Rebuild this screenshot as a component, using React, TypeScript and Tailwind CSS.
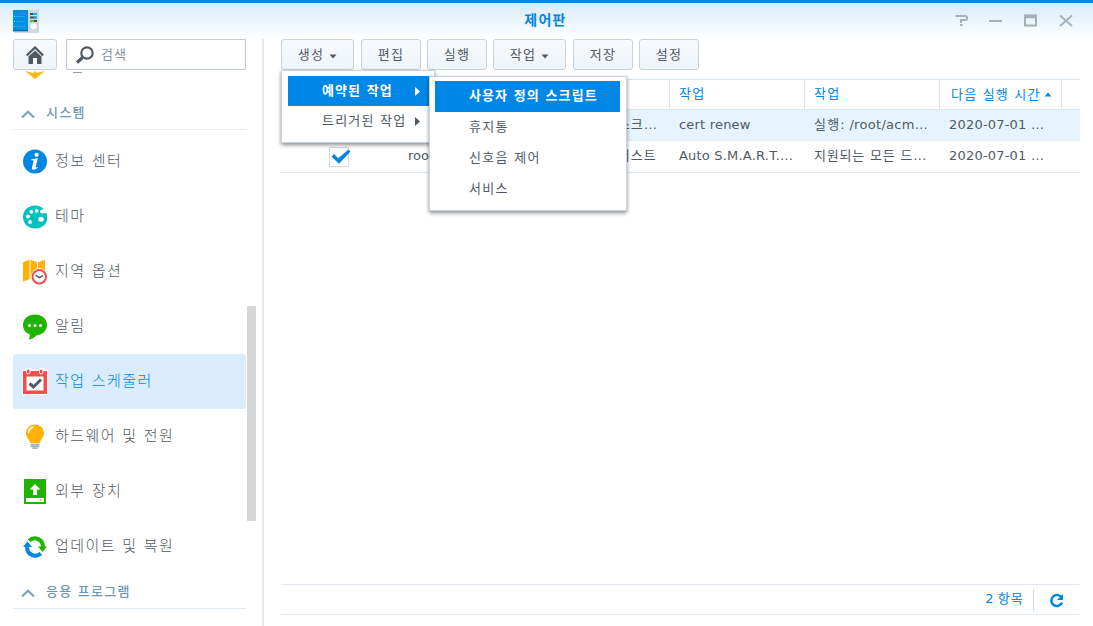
import React from 'react';

const InfoIcon = () => (
  <svg width="24" height="26" viewBox="0 0 24 26">
    <circle cx="12" cy="12.5" r="12" fill="#0086e5" />
    <circle cx="13.6" cy="5.8" r="2.1" fill="#fff" />
    <path d="M8.3 10.3 14.8 9.3 12.7 17.8Q12.5 19 13.4 18.6L14.7 17.9 14.9 18.6Q12.6 20.8 10.6 20.8 8.5 20.6 9.1 18L10.7 11.6 8.2 11.2Z" fill="#fff" />
  </svg>
);

const ThemeIcon = () => (
  <svg width="24" height="24" viewBox="0 0 24 24">
    <path d="M12 .5C5 .5 0 5.500 0 12s5 11.500 12 11.500S24 19 24 14.500V9C22 7 20 9 18.800 8.500 17 8 16.500 6.500 17.500 5.500 18.300 4.500 20 4.500 20.800 4 18.500 1.500 15.500.5 12 .5Z" fill="#00c1bd" />
    <g fill="#fff">
      <circle cx="8.300" cy="6.800" r="1.900" /><circle cx="13.700" cy="5.800" r="1.900" />
      <circle cx="5" cy="11.500" r="1.900" /><circle cx="7" cy="17" r="1.900" />
      <ellipse cx="18" cy="14.200" rx="2.800" ry="2.500" />
    </g>
  </svg>
);

const RegionIcon = () => (
  <svg width="24" height="26" viewBox="0 0 24 26">
    <path d="M0 3.200 6.500.8V20L0 22.800ZM7.500.8 14 3.200V22L7.500 20ZM15 3.200 22 .8V20L15 22.500Z" fill="#ffb200" />
    <circle cx="16.300" cy="17.800" r="8.500" fill="#fff" />
    <circle cx="16.300" cy="17.800" r="6.700" fill="#fff" stroke="#fa4b4b" strokeWidth="2" />
    <path d="m12.700 16.200 3.600 2.500 3.800-2" fill="none" stroke="#505a64" strokeWidth="1.500" />
  </svg>
);

const NotifyIcon = () => (
  <svg width="24" height="26" viewBox="0 0 24 26">
    <path d="M12 .5C5 .5 0 5 0 11c0 4.500 2.500 7.700 6.800 9.500.3 2-.2 3.500-1.400 5 3.400-.5 6-1.800 7.800-4.100C20 20.800 24 16.500 24 11 24 5 19 .5 12 .5Z" fill="#1fb400" />
    <g fill="#fff"><circle cx="6.500" cy="11.500" r="1.500" /><circle cx="12" cy="11.500" r="1.500" /><circle cx="17.500" cy="11.500" r="1.500" /></g>
  </svg>
);

const TaskIcon = () => (
  <svg width="26" height="28" viewBox="0 0 26 28">
    <path d="M0 2h3V0h6v2h8V0h6v2h3v25H0Z" fill="#fff" />
    <path d="M1 3h24v23H1Z" fill="#fa4b4b" />
    <path d="M4.500 8.500h17v14h-17Z" fill="#fff" />
    <rect x="4.500" y="1" width="3.500" height="5" rx="1.700" fill="#fa4b4b" stroke="#fff" />
    <rect x="17.500" y="1" width="3.500" height="5" rx="1.700" fill="#fa4b4b" stroke="#fff" />
    <path d="m7.500 15.500 4 3.500 7.500-7.500" fill="none" stroke="#505a64" strokeWidth="3" />
  </svg>
);

const BulbIcon = () => (
  <svg width="20" height="26" viewBox="0 0 20 26">
    <path d="M10 .5C4.700.5 1 4.500 1 9.300c0 4.200 3.500 6.200 4.300 9.900h9.400C15.500 15.500 19 13.500 19 9.300 19 4.500 15.300.5 10 .5Z" fill="#ffb200" />
    <path d="M3.500 9c.2-3.200 2-5.200 5-6" fill="none" stroke="#fff" strokeWidth="1.500" />
    <path d="M5.500 20.700h9M5.500 22.500h9M7.500 24.200h5" stroke="#a3adb5" strokeWidth="1.400" />
  </svg>
);

const DeviceIcon = () => (
  <svg width="22" height="26" viewBox="0 0 22 26">
    <path d="M0 0h22v25H0Z" fill="#1fb400" />
    <path d="m11 5 5.500 5.500H13V16H9v-5.500H5.500ZM2 19h18v4H2Z" fill="#fff" />
    <circle cx="16.500" cy="21" r="1.100" fill="#ffb200" />
  </svg>
);

const UpdateIcon = () => (
  <svg width="24" height="22" viewBox="0 0 24 22">
    <path d="M6.200 4.700A8 8 0 0 1 19.800 11" fill="none" stroke="#1fb400" strokeWidth="4" />
    <path d="M15 10.500H24l-4.500 5.500Z" fill="#1fb400" />
    <path d="M17.800 17.300A8 8 0 0 1 4.200 11" fill="none" stroke="#0086e5" strokeWidth="4" />
    <path d="M0 11 4.500 5.500 9 11Z" fill="#0086e5" />
  </svg>
);

const items = [
  { label: '정보 센터', Icon: InfoIcon },
  { label: '테마', Icon: ThemeIcon },
  { label: '지역 옵션', Icon: RegionIcon },
  { label: '알림', Icon: NotifyIcon },
  { label: '작업 스케줄러', Icon: TaskIcon, active: true },
  { label: '하드웨어 및 전원', Icon: BulbIcon },
  { label: '외부 장치', Icon: DeviceIcon },
  { label: '업데이트 및 복원', Icon: UpdateIcon },
];

const Chevron = () => (
  <svg width="14" height="9" viewBox="0 0 14 9" className="mt-[3px]"><path d="M1 7.500 7 1.800l6 5.700" fill="none" stroke="#7ea1b9" strokeWidth="2.200" /></svg>
);

const Ko = ({ children }: { children: React.ReactNode }) => <span className="tracking-[1.2px]">{children}</span>;

function ToolButton({ label, menu }: { label: string; menu?: boolean }) {
  return (
    <button className={`flex h-[31px] items-center justify-center gap-[5px] rounded-[3px] border border-[#c8d3de] bg-gradient-to-b from-[#f7fafd] to-[#edf4fa] ${menu ? 'w-[73px]' : 'w-[60px]'}`}>
      <Ko>{label}</Ko>
      {menu && <svg width="8" height="5" viewBox="0 0 8 5" className="mt-[3px]"><path d="M.5.500h7L4 4.500Z" fill="#505a64" /></svg>}
    </button>
  );
}

function Section({ label, className }: { label: string; className: string }) {
  return (
    <div className={`flex w-[233px] items-center gap-[11px] border-b pl-[8px] text-[13px] font-medium leading-[18px] tracking-[1.25px] text-[#6d98b5] ${className}`}>
      <Chevron />
      <span>{label}</span>
    </div>
  );
}

function Row({ user, type, task, action, selected }: { user: string; type: React.ReactNode; task: string; action: React.ReactNode; selected?: boolean }) {
  return (
    <div className={`grid grid-cols-[118px_135px_135px_135px_135px_141px] items-center whitespace-nowrap border-b ${selected ? 'h-[31px] border-[#e2edf6] bg-[#e6f4ff]' : 'h-[32px] border-[#dfe8f0] pb-[1px]'}`}>
      <div className="flex justify-center pr-[2px] pt-[1px]">
        <div className="flex h-[20px] w-[20px] items-center justify-center border border-[#d0dae4] bg-white">
          <svg width="20" height="16" viewBox="0 0 20 16" className="ml-[3px] shrink-0"><path d="m.5 7.500 2.500-2.500 4.200 4.300L17.500.5 19.500 2.500 8 14.800Z" fill="#0086e5" /></svg>
        </div>
      </div>
      <div className="pl-[9px]">{user}</div>
      <div className="flex justify-end pr-[12px]">{type}</div>
      <div className="pl-[10px] tracking-[0.2px]">{task}</div>
      <div className="pl-[10px] tracking-[0.3px]">{action}</div>
      <div className="pl-[10px] tracking-[0.2px]">2020-07-01 …</div>
    </div>
  );
}

export default function App() {
  return (
    <div className="relative flex h-[626px] w-[1093px] flex-col overflow-hidden bg-white font-['DejaVu_Sans','Noto_Sans_CJK_KR',sans-serif] text-[13px] leading-[18px] text-[#505a64]">
      <header className="flex h-[39px] items-center justify-between border-t-[3px] border-[#0086e5] bg-gradient-to-b from-[#d8ebf9] to-white pl-[13px] pr-[19px]">
        <div className="w-[124px]">
          <svg width="26" height="24" viewBox="0 0 26 24">
            <path d="M0 1h15v21H0Z" fill="#0090e3" /><path d="M0 21h15v1.500H0Z" fill="#0069ad" />
            <path d="M15 1h11v21H15Z" fill="#cfd8de" /><path d="M1 22.500h25v1H1Z" fill="#a9b2b8" />
            <path d="M3 7.500h9M3 12.500h9M3 17.500h9" stroke="#20a8ed" />
            <path d="M1 7.500h1M1 12.500h1M1 17.500h1" stroke="#8be7ff" />
            <path d="M17 5h7M17 8.500h7M17 12h7" stroke="#414d55" strokeWidth="1.800" />
            <path d="M20 5h4M21 8.500h3" stroke="#00bbed" strokeWidth="1.800" /><path d="M17 12h4" stroke="#68c735" strokeWidth="1.800" />
            <circle cx="20.500" cy="17.500" r="3" fill="#fff" />
          </svg>
        </div>
        <h1 className="-mt-[2px] text-[14px] font-bold tracking-[1.3px] text-[#0086e5]">제어판</h1>
        <svg width="120" height="14" viewBox="0 0 120 14" fill="none" stroke="#a5b1ba" strokeWidth="2" className="-mt-[3px]">
          <path d="M1.500 3h10q1.500 0 1.500 1.500V6Q13 7 11.500 7H7v3M6 12h2.500" /><path d="M35 8h13" />
          <path d="M71 2.500h11v10H71Z" strokeWidth="2" /><path d="M70 3.500h13" strokeWidth="3.500" />
          <path d="m106 2.500 12 10.500M118 2.500 106 13" />
        </svg>
      </header>

      <div className="flex h-[587px]">
        <aside className="flex w-[264px] flex-col border-r-2 border-[#e6e8ea] pl-[13px]">
          <div className="flex gap-[9px]">
            <button className="flex h-[31px] w-[44px] items-center justify-center rounded-[3px] border border-[#c8d3de] bg-gradient-to-b from-[#f7fafd] to-[#edf4fa]">
              <svg width="18" height="18" viewBox="0 0 18 18">
                <path d="M.8 9.500 9 1.500l8.200 8" fill="none" stroke="#505a64" strokeWidth="2.300" />
                <path d="m2.500 10.500 6.500-6 6.500 6V18h-13Z" fill="#505a64" /><path d="M7 12h4v6H7Z" fill="#fff" />
              </svg>
            </button>
            <div className="flex h-[31px] w-[180px] items-center gap-[7px] border border-[#c0ccd8] bg-white pl-[9px] text-[#8a949e]">
              <svg width="18" height="18" viewBox="0 0 18 18" fill="none" stroke="#505a64"><circle cx="11" cy="7" r="5.700" strokeWidth="2.200" /><path d="m6.500 11.500-5.500 5" strokeWidth="3.300" /></svg>
              <span className="tracking-[1px]">검색</span>
            </div>
          </div>
          <div className="flex h-[556px]">
            <nav className="w-[233px]">
              <div className="flex h-[10px] pl-[12px]">
                <svg width="60" height="10" viewBox="0 0 60 10"><path d="M0 1 8.500 3 10 1 11.500 3 20 1 10 9Z" fill="#ffb619" /><path d="M48 2.500h9" stroke="#969da4" /></svg>
              </div>
              <Section label="시스템" className="h-[50px] border-[#e8eef2] pb-[1px] pt-[18px]" />
              <div className="pt-[4px]">
                {items.map(({ label, Icon, active }) => (
                  <div key={label} className={`flex h-[55px] items-center rounded-[3px] pb-[1px] text-[15px] font-light tracking-[1.45px] ${active ? 'bg-[#d9edff] text-[#0086e5]' : ''}`}>
                    <div className="flex w-[44px] justify-center pt-[2px]"><Icon /></div>
                    <span className="-ml-[2px]">{label}</span>
                  </div>
                ))}
              </div>
              <Section label="응용 프로그램" className="h-[35px] border-[#dfeaf2] pt-[2px]" />
            </nav>
            <div className="ml-[1px] mt-[236px] h-[215px] w-[9px] bg-[#d5d6d8]" />
          </div>
        </aside>

        <main className="flex w-[816px] flex-col pl-[17px]">
          <div className="flex h-[40px] items-start gap-[6px]">
            <div className="mr-[1px]"><ToolButton label="생성" menu /></div>
            <ToolButton label="편집" />
            <ToolButton label="실행" />
            <div className="mr-[1px]"><ToolButton label="작업" menu /></div>
            <ToolButton label="저장" />
            <ToolButton label="설정" />
          </div>
          <div className="grid h-[31px] grid-cols-[118px_135px_136px_135px_135px_122px_18px] border-y border-[#dbe5ee] text-[#0086e5] leading-[28px]">
            <div className="border-r border-[#dbe5ee]" />
            <div className="border-r border-[#dbe5ee]" />
            <div className="border-r border-[#dbe5ee]" />
            <div className="border-r border-[#dbe5ee] pl-[9px]"><Ko>작업</Ko></div>
            <div className="border-r border-[#dbe5ee] pl-[9px]"><Ko>작업</Ko></div>
            <div className="flex items-center gap-[3px] whitespace-nowrap border-r border-[#dbe5ee] pl-[11px]">
              <Ko>다음 실행 시간</Ko>
              <svg width="8" height="5" viewBox="0 0 8 5"><path d="M.5 4.500h7L4 .5Z" fill="#0086e5" /></svg>
            </div>
          </div>
          <Row selected user="root" type={<><Ko>사용자 정의 스크</Ko>…</>} task="cert renew" action={<><Ko>실행</Ko>: /root/acm…</>} />
          <Row user="root" type={<>S.M.A.R.T. <Ko>테스트</Ko></>} task="Auto S.M.A.R.T.…" action={<><span className="tracking-[0.8px]">지원되는 모든 드</span>…</>} />
          <div className="flex-1" />
          <footer className="mb-[11px] flex h-[31px] items-center justify-end border-y border-[#dfe8f0] text-[#0086e5]">
            <span className="mr-[9px] pb-[2px]">2 <Ko>항목</Ko></span>
            <div className="mr-[15px] h-[22px] border-l border-[#d3dee8]" />
            <svg width="15" height="15" viewBox="0 0 15 15" className="mr-[16px] mt-[1px]"><path d="M12.500 4.500A5.500 5.500 0 1 0 13 9.500" fill="none" stroke="#0086e5" strokeWidth="2.500" /><path d="M14 1v6H8Z" fill="#0086e5" /></svg>
          </footer>
        </main>
      </div>

      <div className="absolute left-[281px] top-[70px] h-[73px] w-[154px] border border-[#c8d3de] bg-white p-[5px] pl-[6px] shadow-[0_2px_4px_rgba(0,0,0,0.45)]">
        <div className="flex h-[30px] items-center bg-[#0086e5] pl-[34px] font-bold text-white"><span className="w-[93px] tracking-[1.1px]">예약된 작업</span><svg width="5" height="9"><path d="m0 0 5 4.500L0 9Z" fill="currentColor" /></svg></div>
        <div className="flex h-[30px] items-center pl-[34px]"><span className="w-[93px] tracking-[1.2px]">트리거된 작업</span><svg width="5" height="9"><path d="m0 0 5 4.500L0 9Z" fill="currentColor" /></svg></div>
      </div>
      <div className="absolute left-[429px] top-[76px] h-[135px] w-[198px] border border-[#c8d3de] bg-white px-[5px] pt-[4px] shadow-[0_2px_4px_rgba(0,0,0,0.45)]">
        <div className="flex h-[31px] w-[185px] items-center whitespace-nowrap bg-[#0086e5] pb-[1px] pl-[34px] font-bold tracking-[1.1px] text-white">사용자 정의 스크립트</div>
        {['휴지통', '신호음 제어', '서비스'].map((label) => (
          <div key={label} className="flex h-[31px] items-center pb-[2px] pl-[34px] tracking-[1.3px]">{label}</div>
        ))}
      </div>
    </div>
  );
}
